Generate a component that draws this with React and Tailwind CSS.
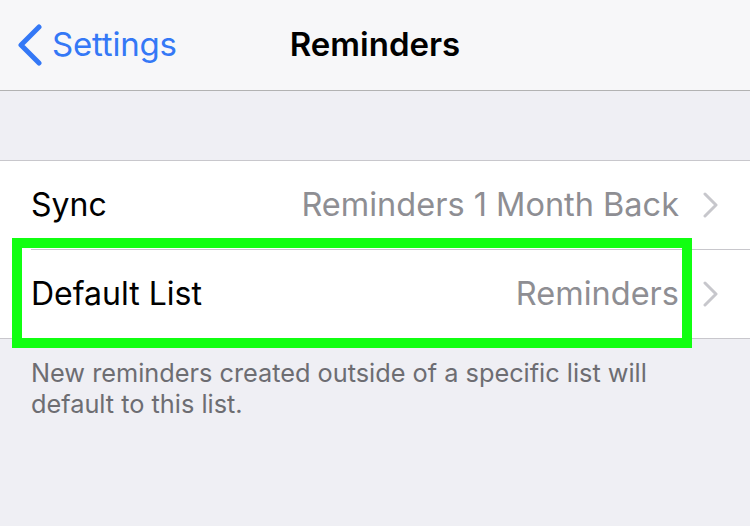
import React from 'react';

const Chevron = () => (
    <svg width="16" height="26" viewBox="0 0 16 26" className="shrink-0">
        <path d="M2 2 L13 13 L2 24" fill="none" stroke="#c7c7cc" strokeWidth="3" strokeLinecap="round" strokeLinejoin="round" />
    </svg>
);

const Row = ({ label, value }) => (
    <div className="h-[88px] flex items-center pl-[31px] pr-[31px]">
        <span className="text-[32px] text-black">{label}</span>
        <span className="ml-auto text-[32.5px] text-[#8e8e93] mr-[24px]">{value}</span>
        <Chevron />
    </div>
);

const App = () => {
    return (
        <div className="w-[750px] h-[526px] bg-[#efeff4] overflow-hidden relative" style={{ fontFamily: 'Inter, "Noto Sans", sans-serif' }}>
            {/* Nav bar */}
            <div className="h-[91px] bg-[#f7f7f9] border-b border-[#b2b2b2] flex items-center relative">
                <div className="flex items-center pl-[17px] text-[#3478f6]">
                    <svg width="26" height="42" viewBox="0 0 26 42">
                        <path d="M22 3 L4 21 L22 39" fill="none" stroke="#3478f6" strokeWidth="5" strokeLinecap="round" strokeLinejoin="round" />
                    </svg>
                    <span className="text-[33px] ml-[9px] tracking-[-0.2px]">Settings</span>
                </div>
                <div className="absolute inset-0 flex items-center justify-center pointer-events-none">
                    <span className="text-[33px] font-semibold text-black">Reminders</span>
                </div>
            </div>

            <div className="h-[69px]" />

            {/* Group */}
            <div className="bg-white border-t border-b border-[#c8c7cc]">
                <Row label="Sync" value="Reminders 1 Month Back" />
                <div className="ml-[31px] h-px bg-[#c8c7cc]" />
                <Row label="Default List" value="Reminders" />
            </div>

            <p className="pl-[31px] pr-[60px] pt-[18px] text-[25.3px] leading-[31px] text-[#6d6d72]">
                New reminders created outside of a specific list will default to this list.
            </p>

            {/* Highlight */}
            <div className="absolute left-[12px] top-[238px] w-[680px] h-[110px] border-[10px] border-[#11ff11]" />
        </div>
    );
};

export default App;
